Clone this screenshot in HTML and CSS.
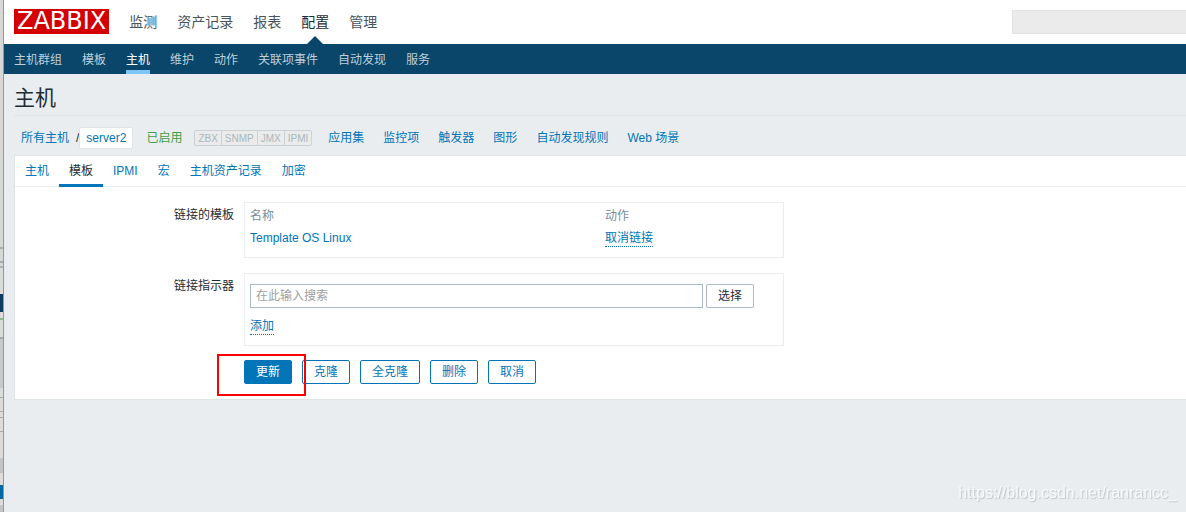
FILE: index.html
```html
<!DOCTYPE html>
<html lang="zh-CN">
<head>
<meta charset="utf-8">
<title>主机 - Zabbix</title>
<link rel="stylesheet" href="styles.css">
</head>
<body>
<div class="window-edge"></div>
<div class="app">
  <header class="top">
    <a class="logo" href="#">ZABBIX</a>
    <nav class="main-nav">
      <a href="#">监测</a>
      <a href="#">资产记录</a>
      <a href="#">报表</a>
      <a href="#" class="selected">配置</a>
      <a href="#">管理</a>
    </nav>
    <input class="global-search" type="text" aria-label="搜索">
  </header>
  <nav class="sub-nav">
    <a href="#">主机群组</a>
    <a href="#">模板</a>
    <a href="#" class="selected">主机</a>
    <a href="#">维护</a>
    <a href="#">动作</a>
    <a href="#">关联项事件</a>
    <a href="#">自动发现</a>
    <a href="#">服务</a>
  </nav>
  <main class="page">
    <h1 class="title">主机</h1>
    <div class="host-bar">
      <a href="#">所有主机</a>
      <span class="slash">/</span>
      <a href="#" class="crumb">server2</a>
      <span class="enabled">已启用</span>
      <span class="badges"><span>ZBX</span><span>SNMP</span><span>JMX</span><span>IPMI</span></span>
      <div class="host-links">
        <a href="#">应用集</a>
        <a href="#">监控项</a>
        <a href="#">触发器</a>
        <a href="#">图形</a>
        <a href="#">自动发现规则</a>
        <a href="#">Web 场景</a>
      </div>
    </div>
    <section class="panel">
      <nav class="tabs">
        <a href="#">主机</a>
        <a href="#" class="selected">模板</a>
        <a href="#">IPMI</a>
        <a href="#">宏</a>
        <a href="#">主机资产记录</a>
        <a href="#">加密</a>
      </nav>
      <form class="form">
        <span class="label">链接的模板</span>
        <div class="box linked">
          <table class="templates">
            <thead><tr><th class="name">名称</th><th>动作</th></tr></thead>
            <tbody><tr><td><a href="#">Template OS Linux</a></td><td><button type="button" class="link">取消链接</button></td></tr></tbody>
          </table>
        </div>
        <label class="label" for="template-search">链接指示器</label>
        <div class="box indicator">
          <div class="picker">
            <input id="template-search" type="text" placeholder="在此输入搜索">
            <button type="button" class="btn grey">选择</button>
          </div>
          <button type="button" class="link">添加</button>
        </div>
        <div class="actions">
          <div class="marked"><button type="button" class="btn primary">更新</button></div>
          <button type="button" class="btn">克隆</button>
          <button type="button" class="btn">全克隆</button>
          <button type="button" class="btn">删除</button>
          <button type="button" class="btn">取消</button>
        </div>
      </form>
    </section>
  </main>
</div>
<div class="watermark">https://blog.csdn.net/ranrancc_</div>
</body>
</html>
```

FILE: styles.css
```css
* { box-sizing: border-box; }

body {
  margin: 0;
  min-height: 100vh;
  display: flex;
  background: #e9edf0;
  color: #1f2c33;
  font: 12px/16px "Liberation Sans", "Noto Sans CJK SC", sans-serif;
  overflow-x: hidden;
}

a { color: #0275b8; text-decoration: none; }
button, input { font: inherit; }

/* Sliver of the window behind, left of the page */
.window-edge {
  flex: 0 0 4px;
  border-right: 1px solid #989898;
  background: linear-gradient(#d9d7d5 0 247px, #aaa 247px 249px, #d9d7d5 249px 261px, #aaa 261px 263px, #d9d7d5 263px 266px, #b0b0b0 266px 268px, #dedcda 268px 294px, #0a3f62 294px 312px, #dedcda 312px 318px, #93b993 318px 320px, #dedcda 320px 337px, #aaa 337px 339px, #c9c9c9 339px 388px, #dedcda 388px 397px, #aaa 397px 398px, #dedcda 398px 411px, #aaa 411px 412px, #dedcda 412px 417px, #aaa 417px 418px, #dedcda 418px 431px, #aaa 431px 432px, #dedcda 432px 458px, #c4c4c4 458px 473px, #dedcda 473px 485px, #0267a3 485px 499px, #dedcda 499px 505px, #c4c4c4 505px);
}

.app { flex: 1; min-width: 0; }

.top {
  display: flex;
  align-items: center;
  height: 44px;
  padding-left: 10px;
  background: #fff;
}
.logo {
  margin-bottom: 2px;
  padding: 0 3px;
  background: #d40000;
  color: #fff;
  font: 24px/25px "DejaVu Sans", sans-serif;
}
.main-nav {
  display: flex;
  gap: 20px;
  align-self: stretch;
  margin-left: 20px;
  font-size: 14px;
  line-height: 44px;
}
.main-nav a { position: relative; color: #47545c; }
.main-nav .selected { color: #1f2c33; }
.main-nav .selected::after {
  content: "";
  position: absolute;
  bottom: 0;
  left: 50%;
  margin-left: -8px;
  border: 8px solid transparent;
  border-top: 0;
  border-bottom-color: #0a466a;
}
.global-search {
  width: 174px;
  height: 24px;
  margin-left: auto;
  border: 1px solid #e3e3e3;
  border-right: 0;
  background: #ebebeb;
}

.sub-nav {
  display: flex;
  gap: 20px;
  height: 30px;
  padding-left: 10px;
  background: #0a466a;
  line-height: 32px;
}
.sub-nav a { color: #bdd0dc; }
.sub-nav .selected { color: #fff; border-bottom: 4px solid #7ec5f5; }

.page { padding-left: 10px; }
.title {
  margin: 0;
  padding: 11px 0 5px;
  border-bottom: 1px solid #dfe4e7;
  font-size: 21px;
  font-weight: 400;
  line-height: 25px;
}

.host-bar {
  display: flex;
  align-items: center;
  padding: 11px 7px 6px;
  white-space: nowrap;
}
.slash { margin-left: 7px; }
.crumb {
  padding: 2px 6px;
  border: 1px solid #dfe4e7;
  border-radius: 2px;
  background: #fff;
}
.enabled { margin: 0 12px 0 13px; color: #429e47; }
.badges {
  display: flex;
  border: 1px solid #c8d2d7;
  border-radius: 2px;
  background: #ebebeb;
  color: #a9b8bf;
  font-size: 10px;
}
.badges span { padding: 1px 3px 0; line-height: 13px; }
.badges span + span { border-left: 1px solid #c8d2d7; }
.host-links { display: flex; gap: 19px; margin-left: 16px; }

.panel {
  border: 1px solid #dfe4e7;
  border-right: 0;
  background: #fff;
}
.tabs {
  display: flex;
  height: 31px;
  border-bottom: 1px solid #ebeef0;
  line-height: 31px;
}
.tabs a { height: 31px; padding: 0 10px; }
.tabs .selected { color: #1f2c33; border-bottom: 3px solid #0275b8; }

.form {
  display: grid;
  grid-template-columns: 219px minmax(0, 540px);
  gap: 15px 10px;
  padding: 15px 0;
}
.label { padding-top: 5px; text-align: right; }
.box { border: 1px solid #ebeef0; }
.linked { padding: 2px 5px 8px; }
.indicator { padding: 10px 5px; }

.templates { width: 100%; border-collapse: collapse; table-layout: fixed; }
.templates th, .templates td {
  height: 22px;
  padding: 0;
  text-align: left;
  font-weight: 400;
}
.templates th { color: #768d99; }
.templates .name { width: 355px; }

.link {
  display: block;
  padding: 0;
  border: 0;
  border-bottom: 1px dotted #0275b8;
  background: none;
  color: #0275b8;
  line-height: 16px;
}
.picker { display: flex; gap: 3px; margin: 0 24px 10px 0; }
.picker input {
  flex: 1;
  min-width: 0;
  height: 24px;
  padding: 0 5px;
  border: 1px solid #acbbc2;
  background: #fff;
}
.picker input::placeholder { color: #a0a0a0; opacity: 1; }

.btn {
  height: 24px;
  padding: 0 11px;
  border: 1px solid #0275b8;
  border-radius: 2px;
  background: #fff;
  color: #0275b8;
  line-height: 22px;
}
.btn.grey { border-color: #acbbc2; color: #1f2c33; }
.btn.primary { background: #0275b8; color: #fff; }

.actions { grid-column: 2; display: flex; gap: 10px; margin-top: -1px; }
.marked { position: relative; }
.marked::after {
  content: "";
  position: absolute;
  inset: -6px -14px -12px -27px;
  border: 2px solid #f00;
  pointer-events: none;
}

.watermark {
  position: fixed;
  right: 9px;
  bottom: 9px;
  color: #f8f9fa;
  font-size: 16px;
  line-height: 20px;
  text-shadow: 1px 1px 1px #c0c4c7;
}
```
